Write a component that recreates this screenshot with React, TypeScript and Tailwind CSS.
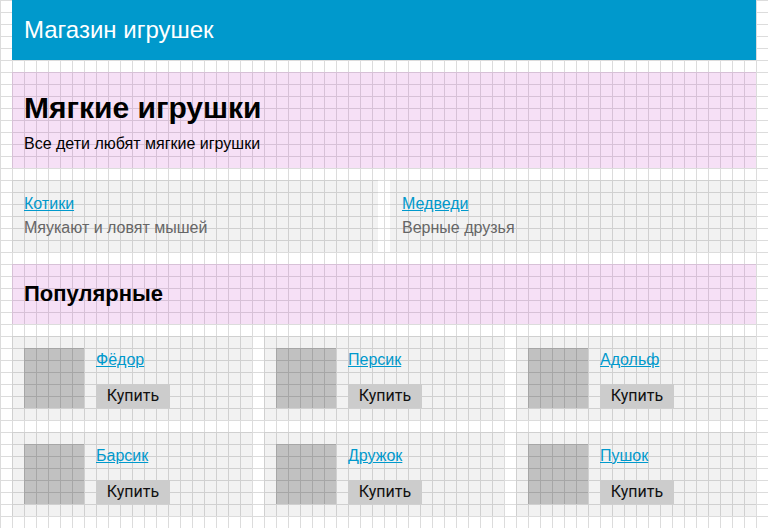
const categories = [
  { name: "Котики", text: "Мяукают и ловят мышей" },
  { name: "Медведи", text: "Верные друзья" },
];

const toys = ["Фёдор", "Персик", "Адольф", "Барсик", "Дружок", "Пушок"];

function ToyCard({ name }: { name: string }) {
  return (
    <div className="flex gap-3 bg-black/5 p-3">
      <div className="h-[60px] w-[60px] shrink-0 bg-black/20" />
      <div className="flex flex-col gap-3">
        <a href="#" className="text-base leading-6 text-[#0099cc] underline">
          {name}
        </a>
        <button className="h-6 w-[74px] bg-[#cccccc] font-[family-name:Roboto,sans-serif] text-base leading-6 text-[#111]">
          Купить
        </button>
      </div>
    </div>
  );
}

export default function App() {
  return (
    <div className="h-[528px] overflow-hidden bg-white bg-[linear-gradient(to_right,#dcdcdc_1px,transparent_1px),linear-gradient(to_bottom,#dcdcdc_1px,transparent_1px)] bg-[size:12px_12px] px-3 font-[family-name:'Liberation_Sans',Arial,sans-serif]">
      <div className="flex flex-col gap-3">
        {/* Header */}
        <header className="bg-[#0099cc] px-3 py-3">
          <div className="text-2xl leading-9 text-white">Магазин игрушек</div>
        </header>

        {/* Hero */}
        <section className="bg-[rgba(180,0,180,0.12)] p-3">
          <h1 className="text-[30px] font-bold leading-[48px] text-black">Мягкие игрушки</h1>
          <p className="text-base leading-6 text-black">Все дети любят мягкие игрушки</p>
        </section>

        {/* Categories */}
        <div className="grid grid-cols-2 gap-3">
          {categories.map((c) => (
            <div key={c.name} className="bg-black/5 p-3">
              <a href="#" className="block text-base leading-6 text-[#0099cc] underline">
                {c.name}
              </a>
              <div className="text-base leading-6 text-[#666]">{c.text}</div>
            </div>
          ))}
        </div>

        {/* Popular */}
        <section className="bg-[rgba(180,0,180,0.12)] p-3">
          <h2 className="text-[22px] font-bold leading-9 text-black">Популярные</h2>
        </section>

        <div className="grid grid-cols-3 gap-3">
          {toys.map((t) => (
            <ToyCard key={t} name={t} />
          ))}
        </div>
      </div>
    </div>
  );
}
